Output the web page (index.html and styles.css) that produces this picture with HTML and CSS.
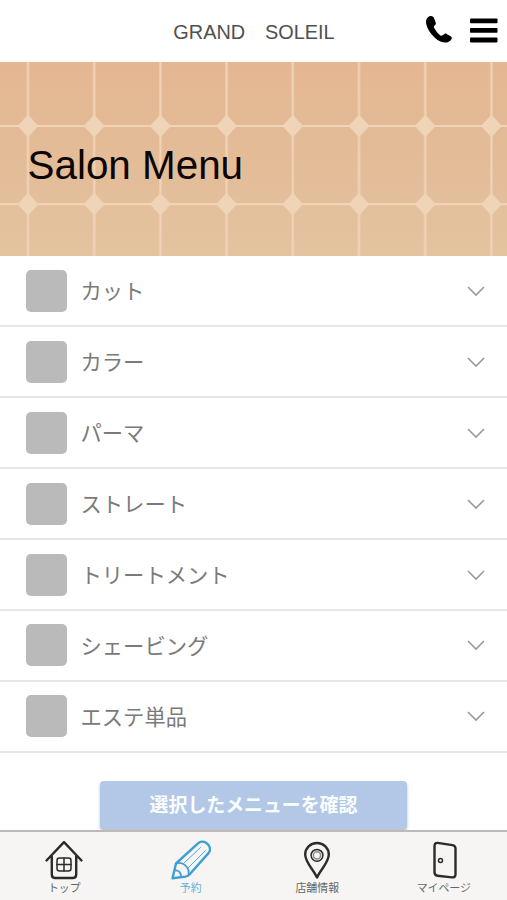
FILE: index.html
```html
<!DOCTYPE html>
<html lang="ja">
<head>
<meta charset="utf-8">
<meta name="viewport" content="width=device-width, initial-scale=1">
<title>GRAND SOLEIL</title>
<link rel="stylesheet" href="styles.css">
</head>
<body>
<div class="app">
  <header class="header">
    <span class="brand">GRAND　SOLEIL</span>
    <div class="actions">
      <svg class="phone" width="28" height="28" viewBox="0 0 28 28"><path d="M6.200 1C4.200.4 1 3 1 6.800c0 4.800 3.600 11 8.600 15.600 4.600 4.300 8.800 5.400 12 5 2.800-.4 5.200-3 5.200-4.500 0-.7-.5-1.300-1.200-1.700l-4-2.300c-.7-.4-1.400-.4-2 0l-2.400 1.700c-.9.400-1.900-.1-3.200-1.400-2.100-2.100-3.900-4.500-4.900-6.500-.5-1.100-.2-1.700.6-2.300.9-.8 1.400-1.500 1.100-2.400L9 2.900C8.600 1.900 7.500 1.400 6.200 1z"/></svg>
      <svg class="bars" width="28" height="26" viewBox="0 0 28 26"><rect y=".5" width="27.500" height="4.800" rx=".8"/><rect y="10" width="27.500" height="4.800" rx=".8"/><rect y="19.600" width="27.500" height="4.800" rx=".8"/></svg>
    </div>
  </header>
  <section class="hero">
    <svg class="tiles" width="507" height="194" viewBox="0 0 507 194">
      <defs>
        <pattern id="tile" x="-5.100" y="0" width="66.200" height="194" patternUnits="userSpaceOnUse">
          <path class="grout" d="M33.100 0v194M0 64h66.200M0 142.200h66.200"/>
          <path class="gem" d="M33.100 52.500l4.800 5.500 5.700 6-5.700 6-4.800 5.500-4.800-5.500-5.700-6 5.700-6zM33.100 130.700l4.800 5.500 5.700 6-5.700 6-4.800 5.500-4.800-5.500-5.700-6 5.700-6z"/>
        </pattern>
      </defs>
      <rect width="507" height="194" fill="url(#tile)"/>
    </svg>
    <h1 class="title">Salon Menu</h1>
  </section>
  <main class="menu">
    <ul class="list">
      <li class="row"><span class="thumb"></span><span class="name">カット</span><svg class="chev" width="18" height="11" viewBox="0 0 18 11"><path d="M1 1l8 8 8-8"/></svg></li>
      <li class="row"><span class="thumb"></span><span class="name">カラー</span><svg class="chev" width="18" height="11" viewBox="0 0 18 11"><path d="M1 1l8 8 8-8"/></svg></li>
      <li class="row"><span class="thumb"></span><span class="name">パーマ</span><svg class="chev" width="18" height="11" viewBox="0 0 18 11"><path d="M1 1l8 8 8-8"/></svg></li>
      <li class="row"><span class="thumb"></span><span class="name">ストレート</span><svg class="chev" width="18" height="11" viewBox="0 0 18 11"><path d="M1 1l8 8 8-8"/></svg></li>
      <li class="row"><span class="thumb"></span><span class="name">トリートメント</span><svg class="chev" width="18" height="11" viewBox="0 0 18 11"><path d="M1 1l8 8 8-8"/></svg></li>
      <li class="row"><span class="thumb"></span><span class="name">シェービング</span><svg class="chev" width="18" height="11" viewBox="0 0 18 11"><path d="M1 1l8 8 8-8"/></svg></li>
      <li class="row"><span class="thumb"></span><span class="name">エステ単品</span><svg class="chev" width="18" height="11" viewBox="0 0 18 11"><path d="M1 1l8 8 8-8"/></svg></li>
    </ul>
    <button class="confirm" type="button">選択したメニューを確認</button>
  </main>
  <nav class="tabs">
    <a class="tab">
      <svg width="40" height="40" viewBox="0 0 40 40"><path class="line" d="M2.500 20.500L20 2.200l17.500 18.300M7.800 16.500v18q0 3.500 3.500 3.500h17.400q3.500 0 3.500-3.500v-18"/><rect class="thin" x="13" y="18" width="14" height="13" rx="2.500"/><path class="thin" d="M20 18v13M13 24.500h14"/></svg>
      <span class="label">トップ</span>
    </a>
    <a class="tab active">
      <svg width="40" height="40" viewBox="0 0 40 40"><path class="line" d="M1.500 38.300L5 23.500 27 3.300c3-2.500 7-1.800 9.700.8s3 6.200.8 9L18.500 34.500q-1.600 1.700-4 2.100z"/><path class="line fine" d="M5.200 23.500c6-2.500 14 3.500 12.300 11.500M3.500 30.500c4-.8 6.800 2.500 6.500 6.500"/><path class="hair" d="M12.500 23.500L29.500 7.500M17 28L34.500 10.500"/></svg>
      <span class="label">予約</span>
    </a>
    <a class="tab">
      <svg width="40" height="40" viewBox="0 0 40 40"><path class="line" d="M20 37.500C16.500 29.500 8.200 22.500 8.200 14.500a11.800 11.500 0 0 1 23.600 0C31.800 22.500 23.500 29.500 20 37.500z"/><circle class="thin" cx="20" cy="15.300" r="5.900"/><circle class="thin soft" cx="20" cy="15.300" r="3.600"/></svg>
      <span class="label">店舗情報</span>
    </a>
    <a class="tab">
      <svg width="40" height="40" viewBox="0 0 40 40"><path class="line" d="M13.500 2.900l15 2.200q3 .5 3 3.500v25.600q0 3.500-3.500 3.200L13.500 35.700Q10.500 35.300 10.500 32V6.200q0-3.500 3-3.300z"/><circle class="thin" cx="16.500" cy="20.500" r="2"/></svg>
      <span class="label">マイページ</span>
    </a>
  </nav>
</div>
</body>
</html>
```
FILE: styles.css
```css
* { box-sizing: border-box; }

body {
  margin: 0;
  background: #fff;
  font-family: "Liberation Sans", "Noto Sans CJK JP", sans-serif;
}

.app {
  display: flex;
  flex-direction: column;
  width: 507px;
  height: 900px;
  overflow: hidden;
}

.header {
  position: relative;
  display: flex;
  flex: none;
  align-items: center;
  justify-content: center;
  height: 62px;
  padding: 2px 0 0 1px;
}

.brand {
  font-size: 19.900px;
  line-height: 24px;
  color: #505050;
}

.actions {
  position: absolute;
  top: 15px;
  right: 9px;
  display: flex;
  gap: 17px;
}

.bars { margin-top: 3px; }

.hero {
  display: grid;
  flex: none;
  align-items: center;
  height: 194px;
  background: linear-gradient(#e4b792, #e3bb97 45%, #e4c39f);
}

.tiles, .title { grid-area: 1 / 1; }

.grout { fill: none; stroke: #f2d3b7; stroke-width: 2.2; }
.gem { fill: #efd4b8; }

.title {
  margin: 11px 0 0 27.500px;
  font-size: 40.4px;
  font-weight: 400;
  line-height: 48px;
  color: #0c0503;
}

.menu {
  display: flex;
  flex: 1;
  flex-direction: column;
  align-items: center;
  min-height: 0;
}

.list {
  width: 100%;
  margin: 0;
  padding: .6px 0 0;
  list-style: none;
}

.row {
  display: flex;
  align-items: center;
  height: 70.9px;
  padding: 0 22px 0 26px;
  border-bottom: 2px solid #e6e6e6;
}

.thumb {
  width: 41px;
  height: 42px;
  border-radius: 5px;
  background: #bababa;
}

.name {
  flex: 1;
  margin-left: 13.500px;
  padding-bottom: 1.500px;
  font-family: "Noto Sans CJK JP", sans-serif;
  font-size: 21.3px;
  font-weight: 400;
  line-height: 32px;
  color: #7a7a7a;
}

.chev { margin-top: 1px; fill: none; stroke: #999; stroke-width: 1.6; }

.confirm {
  width: 307px;
  height: 48px;
  margin: 28.400px 0 0;
  padding: 0 0 3px;
  border: 0;
  border-radius: 4px;
  background: #b3c8e6;
  box-shadow: 0 2px 3px #bbb;
  font-family: "Noto Sans CJK JP", sans-serif;
  font-size: 18.9px;
  font-weight: 700;
  color: #fbfdff;
}

.tabs {
  z-index: 1;
  display: grid;
  flex: none;
  grid-template-columns: repeat(4, 126.500px);
  height: 70px;
  padding-left: 1px;
  border-top: 2px solid #bdb9b8;
  background: #f6f5f3;
}

.tab {
  display: flex;
  flex-direction: column;
  align-items: center;
  padding-top: 8px;
  color: #2c2a2a;
}

.label {
  font-family: "Noto Sans CJK JP", sans-serif;
  font-size: 10.900px;
  line-height: 14px;
  color: #666;
}

.active { color: #3e9fd3; }
.active .label { color: #62b0dc; }

.line, .thin, .hair {
  fill: none;
  stroke: currentColor;
  stroke-linejoin: round;
  stroke-linecap: round;
}

.line { stroke-width: 2.4; }
.fine { stroke-width: 1.8; }
.thin { stroke-width: 1.5; }
.soft { opacity: .5; }
.hair { stroke-width: .9; }
```
